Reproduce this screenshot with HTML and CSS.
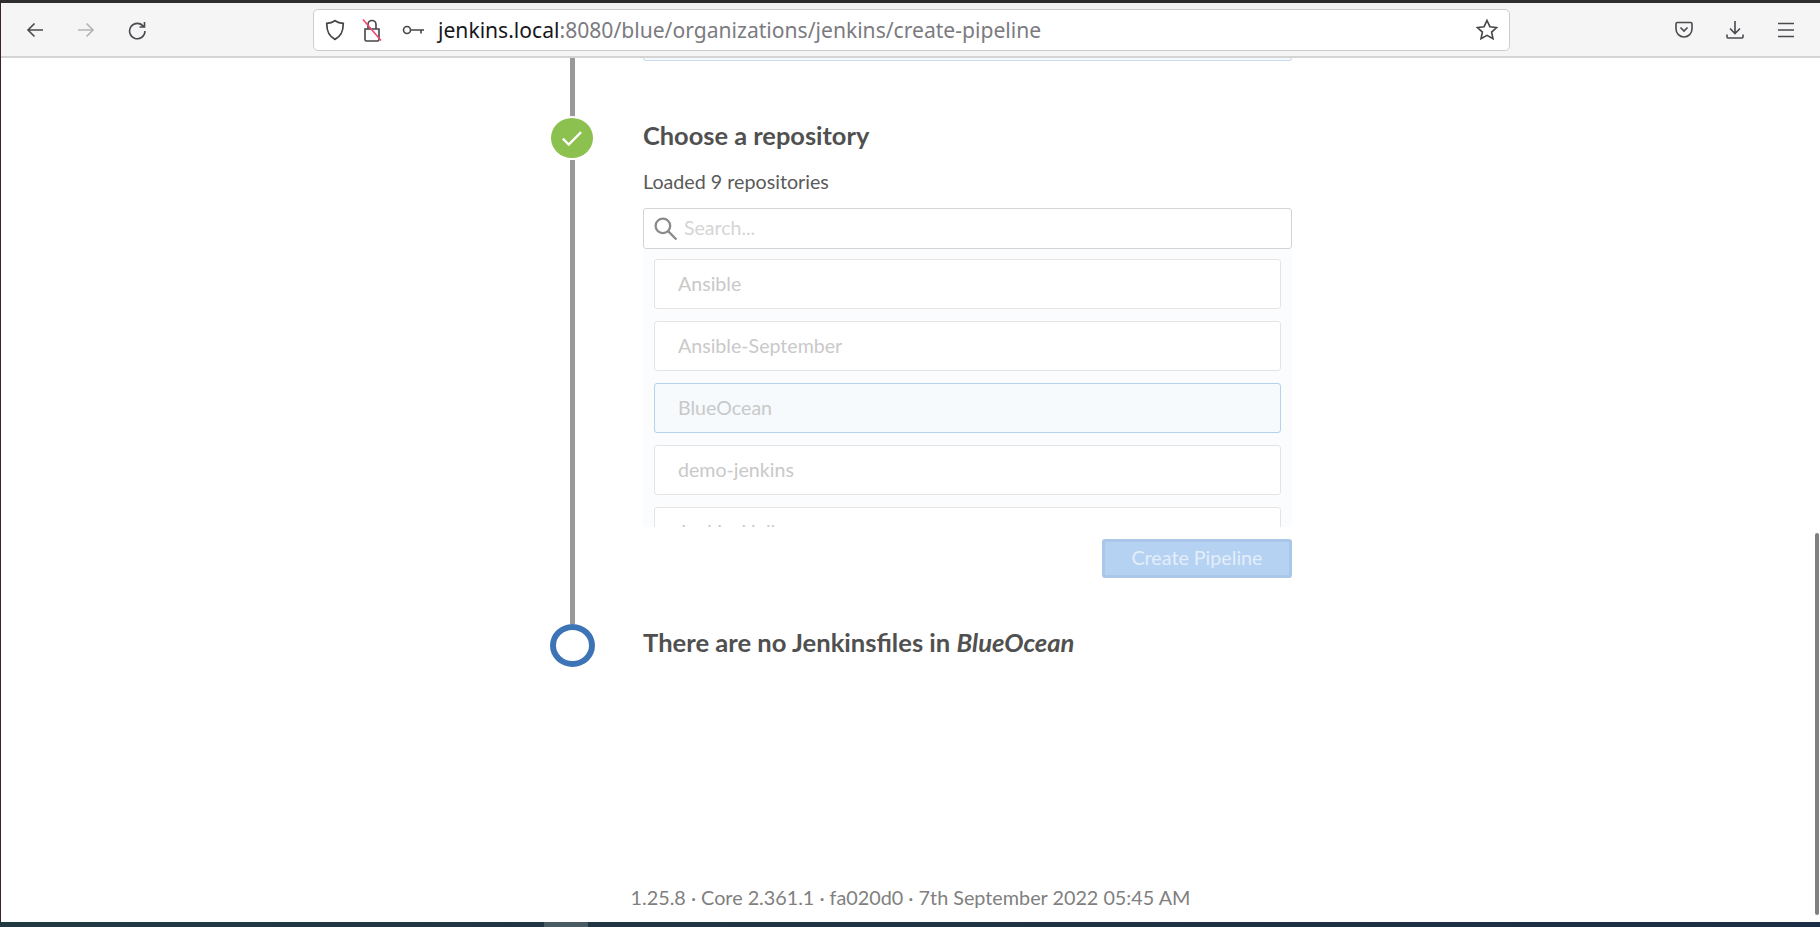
FILE: index.html
```html
<!DOCTYPE html>
<html lang="en">
<head>
    <meta charset="UTF-8">
    <title>Create Pipeline</title>
    <link rel="stylesheet" href="styles.css">
</head>
<body>

<div class="window">
    <!-- Browser toolbar -->
    <header class="toolbar">
        <div class="nav-buttons">
            <svg class="tool-icon" viewBox="0 0 20 20"><path d="M18 10H3M9.500 3.500 3 10l6.500 6.500"/></svg>
            <svg class="tool-icon muted" viewBox="0 0 20 20"><path d="M2 10h15M10.500 3.500 17 10l-6.500 6.500"/></svg>
            <svg class="tool-icon" viewBox="0 0 20 20"><path d="M16.500 6.500A7.700 7.700 0 1 0 18 11M17.500 2v5h-5"/></svg>
        </div>
        <div class="urlbar">
            <svg class="url-icon" viewBox="0 0 20 20"><path d="M10 1.500c2.500 1.600 4.800 2.200 7.500 2.400 0 7-1.500 11.600-7.500 14.600C4 15.500 2.500 10.900 2.500 3.900 5.200 3.700 7.500 3.100 10 1.500z"/></svg>
            <svg class="url-icon lock" viewBox="0 0 20 24">
                <path d="M3 11h14v10.500a1.500 1.500 0 0 1-1.500 1.500h-11A1.500 1.500 0 0 1 3 21.500zM6 11V6.500a4 4 0 0 1 8 0V11"/>
                <path class="slash" d="M1 1.500 19 22.500"/>
            </svg>
            <svg class="url-icon key" viewBox="0 0 24 12"><circle cx="5" cy="6" r="3.500"/><path d="M8.500 6H22M19 6v3.500"/></svg>
            <div class="url-text"><span class="host">jenkins.local</span>:8080/blue/organizations/jenkins/create-pipeline</div>
            <svg class="url-icon star" viewBox="0 0 24 24"><path d="m12 2.500 2.900 6.200 6.700.8-5 4.600 1.400 6.700-6-3.400-6 3.400 1.400-6.700-5-4.600 6.700-.8z"/></svg>
        </div>
        <div class="right-buttons">
            <svg class="tool-icon" viewBox="0 0 20 20"><path d="M3.500 2.500h13a1.500 1.500 0 0 1 1.500 1.500v5a8 8 0 0 1-16 0V4a1.500 1.500 0 0 1 1.500-1.500zM6.500 7.500 10 11l3.500-3.500"/></svg>
            <svg class="tool-icon" viewBox="0 0 20 20"><path d="M10 1v12M5 8.500l5 5 5-5M2 14.500V17a1 1 0 0 0 1 1h14a1 1 0 0 0 1-1v-2.500"/></svg>
            <svg class="tool-icon" viewBox="0 0 20 20"><path d="M2 3.500h16M2 10h16M2 16.500h16"/></svg>
        </div>
    </header>

    <main class="page">
        <div class="wizard">
            <!-- Previous step, scrolled out of view -->
            <section class="step step-prev">
                <div class="rail"><div class="line"></div></div>
                <div class="step-body"><div class="prev-card"></div></div>
            </section>

            <section class="step step-repo">
                <div class="rail">
                    <div class="status done">
                        <svg viewBox="0 0 20 20"><path d="M3 10.500 7.500 15 17 5.500"/></svg>
                    </div>
                    <div class="line"></div>
                </div>
                <div class="step-body">
                    <h2>Choose a repository</h2>
                    <p class="loaded">Loaded 9 repositories</p>
                    <div class="search">
                        <svg viewBox="0 0 24 24"><circle cx="9.500" cy="9.500" r="7"/><path d="m14.500 14.500 8 8"/></svg>
                        <span>Search...</span>
                    </div>
                    <div class="repo-list">
                        <div class="repo">Ansible</div>
                        <div class="repo">Ansible-September</div>
                        <div class="repo selected">BlueOcean</div>
                        <div class="repo">demo-jenkins</div>
                        <div class="repo">JenkinsHello</div>
                    </div>
                    <div class="actions">
                        <button class="create" disabled>Create Pipeline</button>
                    </div>
                </div>
            </section>

            <section class="step step-last">
                <div class="rail"><div class="status pending"></div></div>
                <div class="step-body">
                    <h2>There are no Jenkinsfiles in <em>BlueOcean</em></h2>
                </div>
            </section>
        </div>

        <footer class="version">1.25.8 · Core 2.361.1 · fa020d0 · 7th September 2022 05:45 AM</footer>
        <div class="scrollbar"></div>
    </main>

    <div class="desktop-strip"><div class="strip-thumb"></div></div>
</div>

</body>
</html>
```

FILE: styles.css
```css
* {
    box-sizing: border-box;
}
html, body {
    margin: 0;
    height: 100%;
    overflow: hidden;
}
body {
    font-family: Lato, "Open Sans", sans-serif;
    background-color: #fff;
    color: #505050;
}
.window {
    height: 927px;
    display: flex;
    flex-direction: column;
    border-top: 3px solid #2e2e2e;
    border-left: 1px solid #3a2230;
}

/* toolbar */
.toolbar {
    height: 55px;
    flex: none;
    display: flex;
    align-items: center;
    background-color: #f5f5f5;
    border-bottom: 2px solid #d4d4d4;
}
.nav-buttons {
    width: 312px;
    padding-left: 24px;
    display: flex;
    gap: 31px;
    flex: none;
}
.tool-icon {
    width: 20px;
    height: 20px;
    fill: none;
    stroke: #4a4a4f;
    stroke-width: 1.6;
    flex: none;
}
.tool-icon.muted {
    stroke: #b4b4b4;
}
.urlbar {
    width: 1197px;
    height: 42px;
    flex: none;
    display: flex;
    align-items: center;
    padding: 0 10px;
    background-color: #fff;
    border: 1px solid #cdcdcd;
    border-radius: 5px;
}
.url-icon {
    width: 22px;
    height: 22px;
    fill: none;
    stroke: #45454a;
    stroke-width: 1.6;
    flex: none;
}
.url-icon.lock {
    width: 20px;
    height: 24px;
    margin-left: 16px;
}
.slash {
    stroke: #f0486e;
}
.url-icon.key {
    width: 24px;
    height: 12px;
    margin-left: 20px;
}
.url-text {
    flex: 1;
    margin-left: 12px;
    font-family: "Noto Sans", sans-serif;
    font-size: 21.1px;
    color: #7b7b7f;
    white-space: nowrap;
}
.host {
    color: #17171a;
}
.url-icon.star {
    width: 24px;
    height: 24px;
}
.right-buttons {
    display: flex;
    gap: 31px;
    padding-left: 164px;
}

/* page */
.page {
    flex: 1;
    position: relative;
    overflow: hidden;
    display: flex;
    flex-direction: column;
    background-color: #fff;
}
.wizard {
    flex: 1;
    padding-left: 541px;
}
.step {
    display: flex;
}
.rail {
    width: 60px;
    margin-right: 41px;
    flex: none;
    display: flex;
    flex-direction: column;
    align-items: center;
}
.line {
    flex: 1;
    width: 5px;
    background-color: #999;
}
.status {
    flex: none;
    border-radius: 50%;
}
.status.done {
    width: 46px;
    height: 44px;
    margin-top: -1px;
    border: 2px solid #fff;
    background-color: #8cc04f;
    display: flex;
    align-items: center;
    justify-content: center;
}
.status.done svg {
    width: 26px;
    height: 26px;
    fill: none;
    stroke: #fff;
    stroke-width: 1.8;
}
.status.pending {
    width: 45px;
    height: 43px;
    border: 6px solid #3d74b5;
    background-color: #fff;
}
.step-body {
    width: 649px;
}
.step-prev {
    height: 59px;
}
.prev-card {
    height: 3px;
    background-color: #f6fafd;
    border: 1px solid #c6dcf3;
    border-top: none;
    border-radius: 0 0 4px 4px;
}
.step-repo .step-body {
    padding-bottom: 46px;
}
h2 {
    margin: 0;
    font-size: 25.4px;
    line-height: 36px;
    font-weight: 700;
    color: #505050;
}
.loaded {
    margin: 16px 0 0;
    font-size: 19.7px;
    line-height: 26px;
    color: #5a5a5a;
}
.search {
    margin-top: 13px;
    height: 41px;
    display: flex;
    align-items: center;
    gap: 6px;
    padding: 0 0 3px 9px;
    border: 1px solid #d4d4d4;
    border-radius: 3px;
    font-size: 19.5px;
    color: #d5d5d5;
}
.search svg {
    width: 25px;
    height: 25px;
    margin-top: 3px;
    fill: none;
    stroke: #8a8a8a;
    stroke-width: 2.2;
}
.repo-list {
    height: 278px;
    overflow: hidden;
    padding: 10px 11px 0;
    background-color: #fbfcfe;
    border-radius: 0 0 4px 4px;
    display: flex;
    flex-direction: column;
    gap: 12px;
}
.repo {
    height: 50px;
    flex: none;
    display: flex;
    align-items: center;
    padding: 0 0 2px 23px;
    background-color: #fff;
    border: 1px solid #e4e4e4;
    border-radius: 3px;
    font-size: 19.6px;
    color: #c9c9c9;
}
.repo.selected {
    background-color: #f6fafd;
    border-color: #b4d2f0;
}
.actions {
    display: flex;
    justify-content: flex-end;
    margin-top: 12px;
}
.create {
    width: 190px;
    height: 39px;
    padding: 0 0 2px;
    font-family: inherit;
    font-size: 19.7px;
    color: #e3eefa;
    background-color: #b6d2f2;
    border: 3px solid #aac6e8;
    border-radius: 3px;
}
.step-last h2 {
    font-size: 25.6px;
    line-height: 36px;
}
.version {
    flex: none;
    height: 47px;
    padding-top: 9px;
    text-align: center;
    font-size: 19.8px;
    line-height: 26px;
    color: #808080;
}
.scrollbar {
    position: absolute;
    right: 1px;
    top: 475px;
    bottom: 7px;
    width: 4px;
    background-color: #808080;
    border-radius: 2px;
}

/* desktop behind the browser */
.desktop-strip {
    flex: none;
    height: 5px;
    margin-left: -1px;
    background: linear-gradient(to right, #213a42, #1d2d45);
}
.strip-thumb {
    width: 44px;
    height: 100%;
    margin-left: 544px;
    background-color: #4a5b63;
}
```
